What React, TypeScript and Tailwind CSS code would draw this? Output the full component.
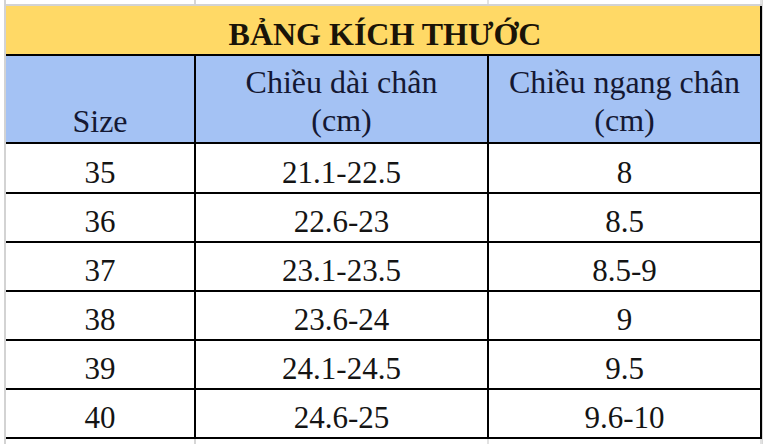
const rows = [
  { size: '35', length: '21.1-22.5', width: '8' },
  { size: '36', length: '22.6-23', width: '8.5' },
  { size: '37', length: '23.1-23.5', width: '8.5-9' },
  { size: '38', length: '23.6-24', width: '9' },
  { size: '39', length: '24.1-24.5', width: '9.5' },
  { size: '40', length: '24.6-25', width: '9.6-10' },
];

function GridStrip({ className }: { className: string }) {
  return (
    <div className={`flex ${className}`}>
      <div className="w-[190px] border-r-2 border-[#d6d6d6]" />
      <div className="w-[293px] border-r-2 border-[#e2e2e2]" />
      <div className="w-[273px] border-r-2 border-[#e2e2e2]" />
    </div>
  );
}

export default function App() {
  return (
    <div className="flex h-[444px] w-[765px] overflow-hidden bg-white font-['Liberation_Serif',serif] text-[31px] leading-[36px] text-[#141414]">
      <div className="w-[6px] shrink-0 border-r-2 border-[#d3d3d3]" />

      <div className="flex w-[756px] shrink-0 flex-col">
        <GridStrip className="h-[6px] border-b-2 border-[#d3d3d3]" />

        <div className="flex h-[50px] items-end justify-center border-r-2 border-b-2 border-black bg-[#ffd966] pb-[2px] pl-1 text-[32px] font-bold text-[#1a1408]">
          BẢNG KÍCH THƯỚC
        </div>

        <div className="flex h-[88px] border-b-2 border-black bg-[#a4c2f4] text-[32px] leading-[38px] text-[#141833]">
          <div className="flex w-[190px] items-end justify-center border-r-2 border-black pb-[2px]">Size</div>
          <div className="flex w-[293px] flex-col items-center justify-center border-r-2 border-black pt-[4px]">
            <span>Chiều dài chân</span>
            <span>(cm)</span>
          </div>
          <div className="flex w-[273px] flex-col items-center justify-center border-r-2 border-black pt-[4px]">
            <span>Chiều ngang chân</span>
            <span>(cm)</span>
          </div>
        </div>

        {rows.map((row, i) => (
          <div
            key={row.size}
            className={`flex border-b-2 border-black ${i === 0 ? 'h-[50px]' : 'h-[49px]'}`}
          >
            <div className="flex w-[190px] items-end justify-center border-r-2 border-black pb-px">{row.size}</div>
            <div className="flex w-[293px] items-end justify-center border-r-2 border-black pb-px">{row.length}</div>
            <div className="flex w-[273px] items-end justify-center border-r-2 border-black pb-px">{row.width}</div>
          </div>
        ))}

        <GridStrip className="flex-1" />
      </div>

      <div className="w-[3px] shrink-0 border-l border-[#d8d8d8]" />
    </div>
  );
}
